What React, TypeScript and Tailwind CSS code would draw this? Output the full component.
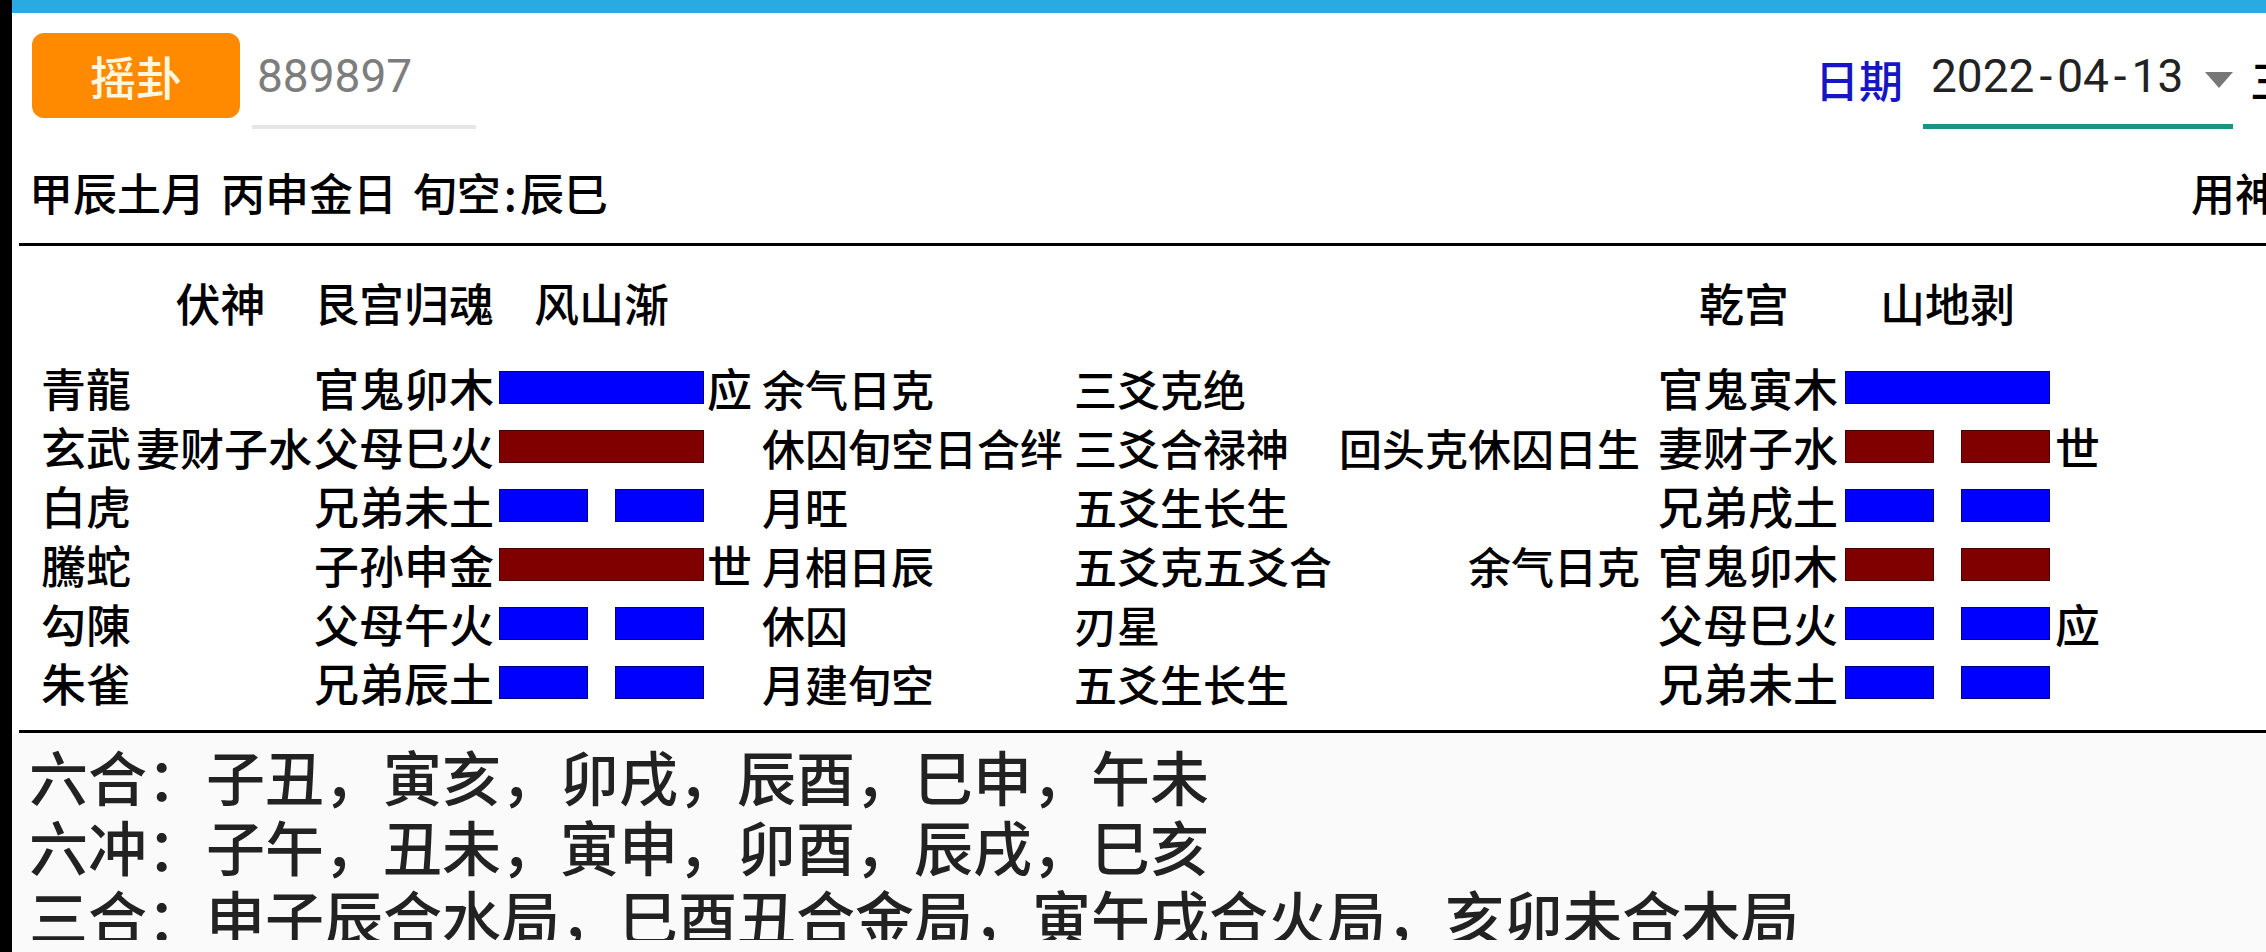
import React from 'react';

type Yao = {
  god: string;
  fu?: string;
  main: string;
  mainYang: boolean;
  mark?: string;
  state: string;
  pos: string;
  change?: string;
  bian: string;
  bianYang: boolean;
  bianMark?: string;
  moving?: boolean;
};

const rows: Yao[] = [
  { god: '青龍', main: '官鬼卯木', mainYang: true, mark: '应', state: '余气日克', pos: '三爻克绝', bian: '官鬼寅木', bianYang: true },
  { god: '玄武', fu: '妻财子水', main: '父母巳火', mainYang: true, state: '休囚旬空日合绊', pos: '三爻合禄神', change: '回头克休囚日生', bian: '妻财子水', bianYang: false, bianMark: '世', moving: true },
  { god: '白虎', main: '兄弟未土', mainYang: false, state: '月旺', pos: '五爻生长生', bian: '兄弟戌土', bianYang: false },
  { god: '騰蛇', main: '子孙申金', mainYang: true, mark: '世', state: '月相日辰', pos: '五爻克五爻合', change: '余气日克', bian: '官鬼卯木', bianYang: false, moving: true },
  { god: '勾陳', main: '父母午火', mainYang: false, state: '休囚', pos: '刃星', bian: '父母巳火', bianYang: false, bianMark: '应' },
  { god: '朱雀', main: '兄弟辰土', mainYang: false, state: '月建旬空', pos: '五爻生长生', bian: '兄弟未土', bianYang: false },
];

const lines = [
  '六合：子丑，寅亥，卯戌，辰酉，巳申，午未',
  '六冲：子午，丑未，寅申，卯酉，辰戌，巳亥',
  '三合：申子辰合水局，巳酉丑合金局，寅午戌合火局，亥卯未合木局',
];

function Bar({ yang, red }: { yang: boolean; red?: boolean }) {
  const seg = red
    ? 'h-[33px] border border-[#4a0000] bg-[#800000]'
    : 'h-[33px] border border-[#000080] bg-[#0000ff]';
  if (yang) return <div className={`w-[205px] ${seg}`} />;
  return (
    <div className="flex w-[205px] justify-between">
      <div className={`w-[89px] ${seg}`} />
      <div className={`w-[89px] ${seg}`} />
    </div>
  );
}

function Row({ y }: { y: Yao }) {
  return (
    <div className="flex h-[59px] items-center whitespace-nowrap text-[45px] leading-[56px]">
      <div className="w-[88px] shrink-0">{y.god}</div>
      <div className="w-[183px] shrink-0 text-right text-[44px]">{y.fu}</div>
      <div className="w-[182px] shrink-0 text-right">{y.main}</div>
      <div className="ml-[5px] shrink-0">
        <Bar yang={y.mainYang} red={y.moving} />
      </div>
      <div className="w-[58px] shrink-0 pl-[3px]">{y.mark}</div>
      <div className="w-[312px] shrink-0 text-[43px]">{y.state}</div>
      <div className="w-[258px] shrink-0 text-[43px]">{y.pos}</div>
      <div className="w-[308px] shrink-0 text-right text-[43px]">{y.change}</div>
      <div className="w-[198px] shrink-0 text-right">{y.bian}</div>
      <div className="ml-[7px] shrink-0">
        <Bar yang={y.bianYang} red={y.moving} />
      </div>
      <div className="shrink-0 pl-[5px]">{y.bianMark}</div>
    </div>
  );
}

export default function App() {
  return (
    <div className="flex h-[952px] w-full overflow-hidden bg-white font-['Noto_Sans_CJK_SC',sans-serif] font-medium text-black">
      <div className="h-full w-[12px] shrink-0 bg-black" />
      <div className="flex min-w-0 flex-1 flex-col">
        <div className="h-[13px] bg-[#29abe2]" />

        {/* top bar */}
        <div className="flex h-[116px] items-start overflow-hidden whitespace-nowrap">
          <button className="ml-[20px] mt-[20px] flex h-[85px] w-[208px] shrink-0 items-center justify-center rounded-[12px] bg-[#ff8a00] text-[46px] text-[#fff6df]">
            摇卦
          </button>
          <div className="ml-[12px] flex h-[116px] w-[224px] shrink-0 items-center border-b-[4px] border-[#e6e6e6] pl-[5px] pt-[15px] font-['Roboto',sans-serif] text-[46px] font-normal text-[#7d7d7d]">
            889897
          </div>
          <div className="ml-[1339px] flex h-[116px] shrink-0 items-center pt-[15px] text-[44px] text-[#1616c4]">
            日期
          </div>
          <div className="ml-[20px] flex h-[116px] w-[310px] shrink-0 items-center border-b-[5px] border-[#1a9384] pl-[8px] pt-[15px] font-['Roboto',sans-serif] text-[46px] font-normal text-[#222]">
            <span>
              2022<span className="mx-[5px]">-</span>04<span className="mx-[5px]">-</span>13
            </span>
            <span className="ml-auto mt-[8px] h-0 w-0 border-x-[14px] border-t-[16px] border-x-transparent border-t-[#777]" />
          </div>
          <div className="ml-[17px] flex h-[116px] shrink-0 items-center pt-[15px] text-[44px]">三</div>
        </div>

        {/* date info */}
        <div className="flex h-[114px] items-center overflow-hidden whitespace-pre pt-[12px] text-[44px] [word-spacing:6px]">
          <div className="w-[2179px] shrink-0 pl-[17px]">
            甲辰土月 丙申金日 旬空<span className="px-[3px]">:</span>辰巳
          </div>
          <div className="shrink-0">用神</div>
        </div>
        <div className="ml-[7px] h-[3px] bg-black" />

        {/* hexagram table */}
        <div className="overflow-hidden pl-[29px] pt-[27px] text-[45px]">
          <div className="mb-[25px] flex h-[60px] items-center whitespace-nowrap">
            <div className="w-[88px] shrink-0" />
            <div className="w-[183px] shrink-0 text-center">伏神</div>
            <div className="w-[182px] shrink-0 text-right">艮宫归魂</div>
            <div className="ml-[5px] w-[205px] shrink-0 text-center">风山渐</div>
            <div className="w-[936px] shrink-0" />
            <div className="w-[198px] shrink-0 pl-[10px] text-center">乾宫</div>
            <div className="ml-[7px] w-[205px] shrink-0 text-center">山地剥</div>
          </div>
          {rows.map((y) => (
            <Row key={y.god} y={y} />
          ))}
        </div>
        <div className="ml-[7px] mt-[18px] h-[3px] bg-black" />

        {/* rules */}
        <div className="flex-1 bg-[#fafafa]">
          <div className="h-[207px] overflow-hidden whitespace-nowrap pl-[17px] pt-[8px] text-[59px] leading-[70px] text-[#222]">
            {lines.map((l) => (
              <div key={l}>{l}</div>
            ))}
          </div>
        </div>
      </div>
    </div>
  );
}
